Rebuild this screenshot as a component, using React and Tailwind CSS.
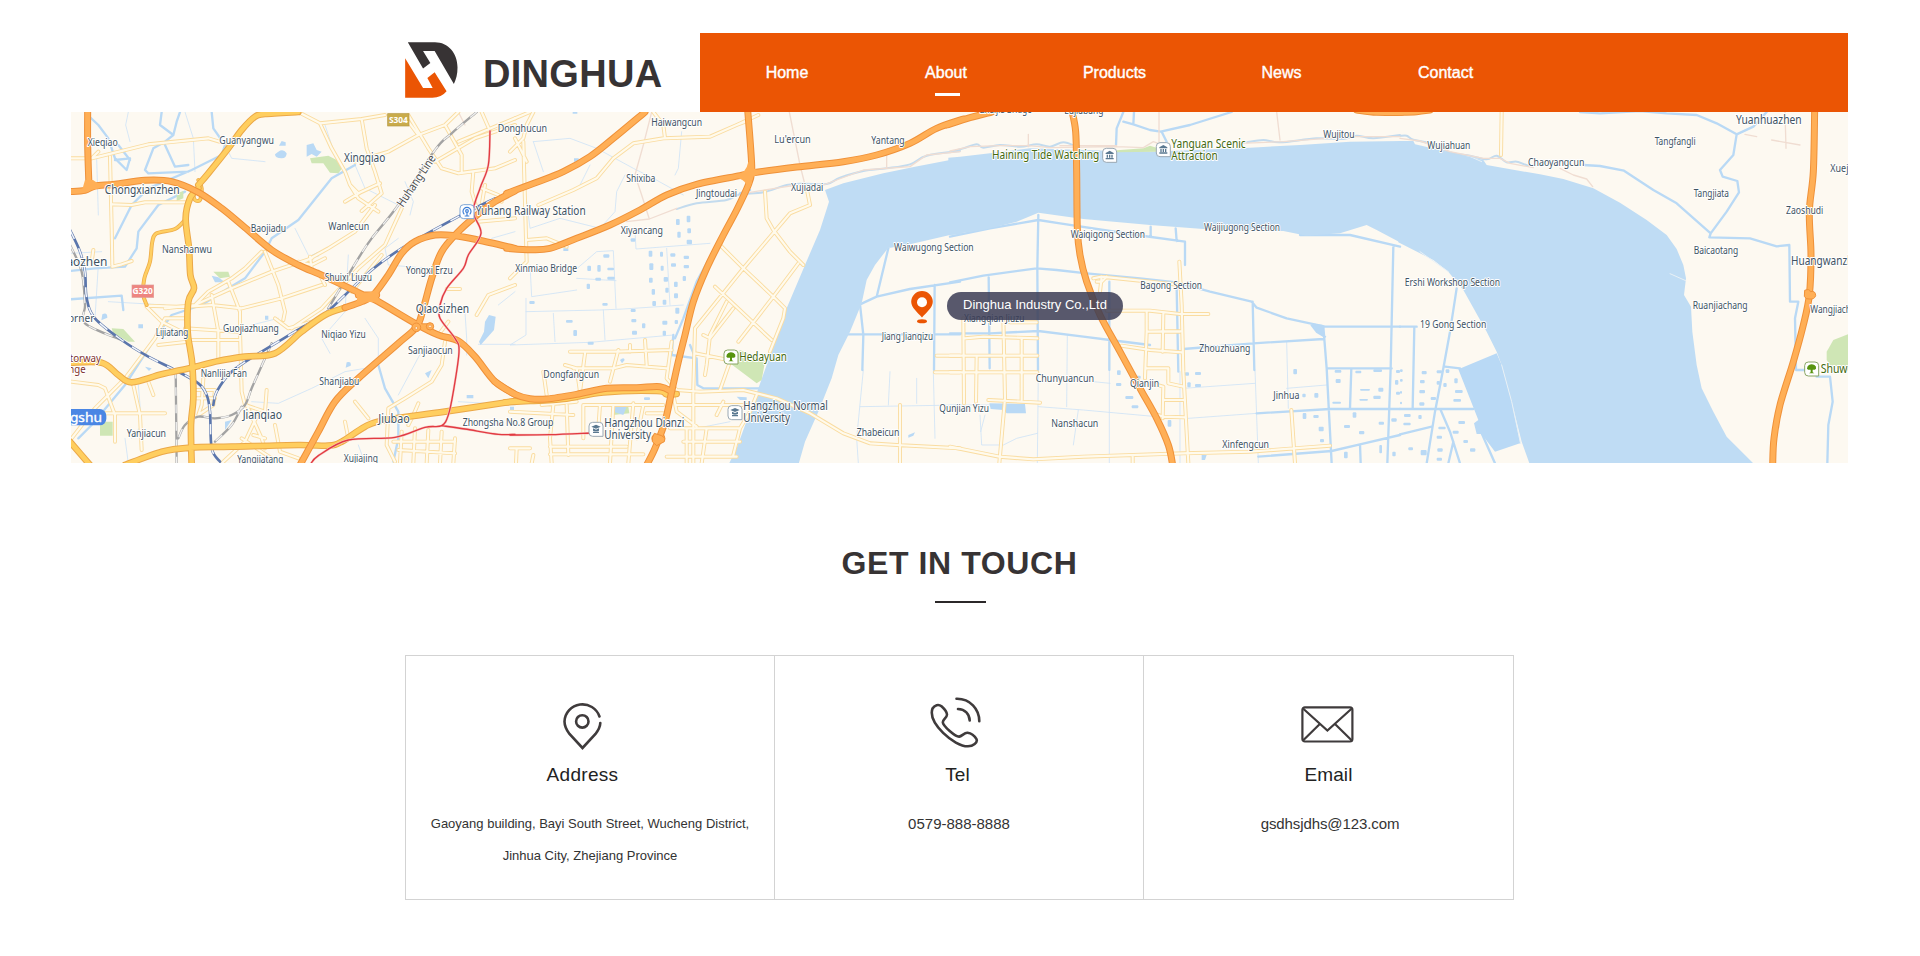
const navItems = [
  { name: 'Home', left: 'ml-[66px]', width: 'w-[42px]' },
  { name: 'About', left: 'ml-[117px]', width: 'w-[42px]', active: true },
  { name: 'Products', left: 'ml-[116px]', width: 'w-[63px]' },
  { name: 'News', left: 'ml-[115px]', width: 'w-[41px]' },
  { name: 'Contact', left: 'ml-[116px]', width: 'w-[55px]' },
];

// The map is cut in four tiles, three map units to one pixel.
// Label: [x, baseline, width, text, big]
const tiles = [
  {
    x: 0,
    streams:
      'M60 90L62 250M95 160L100 330M190 21L182 60 195 110M390 200L385 100 360 21M110 440L15 445M130 590L300 600 M480 120L500 160 600 170 M780 60L810 150 M870 180L900 250 1000 300 M1020 230L1045 290 1035 330 M690 370L730 450M850 450L840 620 770 700 795 745M1200 620L1205 700 1205 750M1240 718H1350M1080 720L1000 870M640 640L560 660 M900 640L940 700 940 780M1350 560L1300 600M1000 400L960 430 970 480 1090 490M560 890L640 895 740 850 840 800 900 790M180 1000L190 1075M900 1075L880 1020M1350 900L1180 890M100 480L90 640M220 840L230 960 200 1000M1280 400L1350 380',
    canals:
      'M68 30L100 60 130 100 150 160 185 195 195 160 150 165M195 165L160 120M290 21L285 60 325 90 335 50 345 21M325 90L300 110 265 130 240 195 250 205 370 200M300 120L330 185 370 180 M440 21L445 70 480 120 470 150 380 195 250 250 200 300 150 400M360 260L280 300 220 380 215 430 180 485 90 490 15 498 M15 583L170 572 175 615M870 180L800 220 700 345 620 400 600 440 540 520 490 550 410 600 320 630 270 700 180 840 80 960 40 1000M940 780L960 850 1000 920 1000 1000 985 1070',
    ponds:
      'M725 120l20 -5 10 20 15 5 -15 15 -15 -8 -15 8zM640 140q15 -10 25 5 0 15 -15 15 -20 0 -20 -12zM650 108l12 4 0 10 -20 0zM1260 650l12 -20 20 5 -5 40 -40 45 -5 -10 15 -30zM440 512l20 5 20 15 -30 0zM112 628q15 -8 15 10l-18 8zM845 772q15 -5 12 10l-15 6zM600 632h10v12h-10zM220 658h14v12h-14zM1205 870h20v10h-20zM1080 805l20 -10 -10 25zM740 450l20 -10 0 15zM240 785l20 5 -8 8zM480 950l20 -5 -20 30z',
    parks:
      'M735 160L790 152 815 165 835 185 820 205 795 203 775 175 740 175zM445 500h20l25 0 5 15 -30 5zM140 670L175 672 210 710 190 710 145 685zM335 265L355 258 355 280 335 288zM105 950h38v42h-38z',
    paths: 'M1200 60L1180 21',
    minor:
      'M15 160H80L250 118 430 100 480 115M80 160L100 140M135 155L140 370 142 480M142 298L200 300 240 292 360 292M142 485L170 478 200 468M700 21L765 55 890 42 960 30M765 55L800 130 840 200 855 240 880 280 940 320M890 42L905 130 930 200 950 265 890 318M855 240L880 265 945 235M840 290L890 260M870 170L970 140 1060 90 1140 60 1180 21M1030 30L1090 130 1130 190 1180 205 1290 190 1350 165M1140 60L1190 150 1190 200M1180 110L1350 40M1250 21L1275 78M1225 200L1220 260 1235 310M1060 90L1030 50M1110 170L1230 100 1350 60M1010 310L960 420 880 490 770 610 680 670M930 300L870 380 790 430 700 480 M590 440L540 490 500 520 430 560 390 600 300 610 M600 440L640 540 660 620 655 645M245 602L360 606 440 600 530 610 650 580 770 540M390 600L500 550 620 500 740 460M440 570L460 680 460 760M490 530L525 620 525 680 530 860 540 900 600 920 605 855M360 670L520 680M380 705L520 705M370 640L300 640 270 700 180 820 90 910 20 1000M245 605L290 650 350 680M280 720L370 710M630 640L670 670 740 650M20 830L100 840 120 850 150 930 150 1010M205 840L225 930 230 1035M120 925L300 925M250 830L265 870M415 820L410 900 400 930M385 855H450L445 900 400 930M385 880H450M950 450L860 560M1350 540L1270 570 1235 630M1140 710L1130 780 1100 830 1020 880 970 910 965 1020 990 1070M870 890L910 940M1060 895L1045 930 1030 960M985 1010H1170M1000 1035L1170 1045M1010 980L1005 1075M1050 970L1045 1075M1090 975L1085 1075M1130 980L1125 1075M1170 1000L1165 1075M840 950L850 1000M700 470L740 480 780 460M735 455L740 490M780 540L760 500M1145 552H1185M565 990L600 1000M545 900L590 1000 600 1030M575 935L540 1010 470 1075M530 1000L620 1060M630 960L645 1040 700 1060M85 435L80 470M1150 650L1120 690M1250 250L1300 270 1310 290M1240 350L1350 340M1260 240L1250 300',
    yellow:
      'M840 608L780 630 710 680 630 745 540 755 460 768 380 788 290 808 200 832 160 810 110 773 15 773M700 21L600 27 570 35 530 75 490 130 430 205 400 240M400 250L375 280 362 340 372 430 376 510 387 550 370 590 368 680 375 730 382 780 385 880 378 960 380 1080M15 1010L75 1080M180 1080L290 1040 375 1028 500 1025 700 1020 790 1022 830 1010 900 965 960 945 1140 920 1350 888',
    yellowThin: 'M360 345L330 372 275 385 262 410 255 470 238 520 235 570 245 600M385 270L390 285 405 285 410 250 400 225',
    orange:
      'M68 15L68 120 72 245M15 260L60 256 90 243 150 238 240 226 320 230 400 262 470 310 540 368 620 435 700 480 780 515 900 572 940 590 1050 655 1120 690 1180 708 1230 755 1290 830 1350 868M1350 258L1290 290 1230 335 1180 380 1130 440 1100 520 1075 610 1055 665 1000 715 880 820 810 890 760 980 705 1080M1350 430L1240 405 1170 392 1110 390 1050 410 1010 445 970 510 925 570 890 590 840 608M880 570L935 570M1055 665L1095 665',
    rail: 'M15 375L45 440 60 500 65 580 90 640 170 705 250 755 330 795 400 835 425 870 435 920 440 1030 465 1070M1290 280L1180 335 1010 430 920 495 840 570 780 625 690 680 590 740 500 800 455 860 445 900',
    railGrey:
      'M1235 21L1160 85 1110 135 1000 300 920 400 880 460 790 610M15 420L50 500 60 600 60 655 170 705M332 795L335 1075M620 715L600 760 560 850 540 900 500 930 450 940 400 935 360 960 340 1000M530 905L500 960 450 1010',
    metro:
      'M1275 78L1270 180 1245 250 1225 320 1248 385 1210 450 1195 490 1145 550 1125 600 1125 640 1170 700 1182 740 1165 860 1150 930 1130 962 1080 967 990 997 850 1005 760 1052 735 1080M1130 962L1200 972 1300 988 1350 988',
    labels: [
      [68, 122, 90, 'Xieqiao'],
      [463, 117, 164, 'Guanyangwu'],
      [837, 172, 124, 'Xingqiao', true],
      [119, 266, 225, 'Chongxianzhen', true],
      [557, 381, 106, 'Baojiadu'],
      [790, 375, 123, 'Wanlecun'],
      [291, 445, 150, 'Nanshanwu'],
      [-33, 482, 160, 'Qiaozhen', true],
      [779, 528, 142, 'Shuixi Liuzu'],
      [1023, 507, 140, 'Yongxi Erzu'],
      [-10, 650, 98, 'Corner'],
      [272, 692, 98, 'Lijiatang'],
      [474, 682, 167, 'Guojiazhuang'],
      [1052, 624, 160, 'Qiaosizhen', true],
      [769, 700, 133, 'Niqiao Yizu'],
      [1029, 747, 134, 'Sanjiaocun'],
      [407, 817, 139, 'Nanlijia Fan'],
      [763, 839, 120, 'Shanjiabu'],
      [533, 942, 118, 'Jianqiao', true],
      [940, 953, 94, 'Jiubao', true],
      [185, 995, 118, 'Yanjiacun'],
      [517, 1073, 138, 'Yangjiatang'],
      [836, 1070, 103, 'Xujiajing'],
      [1193, 962, 272, 'Zhongsha No.8 Group'],
      [1232, 330, 330, 'Yuhang Railway Station', true],
      [1298, 81, 148, 'Donghucun'],
    ],
  },
  {
    x: 1335,
    streams:
      'M70 110L100 200M70 110L180 100 260 130 370 190 430 220 520 270M515 80L505 190 495 210M240 180L205 250M345 210L320 260 315 320 270 370 M270 370L150 340 60 370 50 290M375 380L378 432 600 415M48 580V690L0 720 240 712 490 690M48 620L270 615 340 612 520 600M130 625L135 710M280 615L285 705M470 430L480 600M190 500L260 440 310 437 318 610M200 520L318 527M60 480L65 575 200 555M1130 430L1200 415M1060 795L1040 1000 1045 1075M1140 800L1135 900M1220 820V895M1050 905L1350 900M1270 800L1275 1000M70 890L150 900M560 970L660 950',
    canals:
      'M690 265L720 255M1350 530L1200 552 1100 575 1050 598 1020 620M1050 598L1060 690 1057 795M1135 430L1100 575M1010 688H1350M1274 540L1272 795M485 750L560 760 562 840 580 850 750 850M540 720L555 755M490 690L485 750M690 300L620 420 560 530 520 640 495 700',
    river:
      'M655 1080L680 1030 720 920 770 780 830 610 885 480 930 375 957 290 945 255 1000 235 1120 205 1215 185 1355 158V388L1320 390 1200 418 1135 428 1095 480 1070 525 1055 595 1020 680 985 750 965 820 925 920 885 1010 865 1080z',
    ponds:
      'M188 21h14v5h-14zM192 160h14v10h-14zM305 905L330 900 350 905 340 930 310 920zM330 765q12 -10 14 0l-8 10zM680 875l30 2 0 8 -20 0zM1195 990l20 -8 -5 10 -15 6zM160 430h15v8h-15zM0 905h12v12h-12z',
    blocks: [
      [498, 342, 11, 18], [530, 332, 11, 20], [502, 380, 10, 18], [532, 370, 11, 15], [530, 404, 16, 14], [362, 400, 14, 10], [280, 448, 18, 10],
      [416, 437, 11, 18], [450, 440, 9, 15], [481, 445, 15, 10], [521, 452, 16, 10], [232, 482, 11, 16], [262, 480, 10, 20], [292, 488, 20, 8],
      [418, 475, 12, 20], [452, 482, 9, 15], [483, 475, 15, 10], [521, 480, 16, 10], [256, 518, 17, 9], [292, 515, 22, 9], [230, 536, 10, 16],
      [417, 518, 11, 15], [461, 516, 13, 14], [492, 530, 11, 16], [518, 513, 10, 15], [425, 552, 10, 17], [427, 588, 11, 15], [466, 548, 10, 15],
      [458, 584, 11, 15], [492, 565, 12, 15], [496, 608, 12, 18], [58, 588, 16, 9], [277, 594, 16, 8], [168, 645, 20, 8], [190, 675, 11, 18],
      [362, 612, 15, 9], [364, 642, 15, 10], [366, 677, 15, 12], [396, 655, 10, 15], [457, 647, 15, 12], [458, 677, 10, 15], [494, 645, 10, 12], [233, 710, 18, 9], [402, 877, 18, 8],
    ],
    parks: 'M660 775L690 735 765 770 755 825 740 835zM305 912L355 905 358 925 310 930z',
    paths: 'M425 21L400 120 375 210 395 270 418 342M838 21L870 180 885 240M1130 150V190M350 350L418 342 500 310M720 262L860 240M940 240L1060 195 1200 185 1250 150 1350 140',
    shore: 'M500 312L560 295 650 285 690 268 760 262 830 240 880 236 950 237 990 218 1060 198 1130 190 1200 178 1250 152 1350 138',
    minor:
      'M0 140L40 100 50 60 70 21M40 110L48 400M15 40L60 21M15 100L50 170M465 100L460 60 430 21M85 300L190 255 260 220 310 160 370 115 460 100 600 95 680 60 745 30M680 60L720 45M48 400L50 470 0 520M50 405L110 400 170 425M765 260L770 340 790 375 840 440 880 480M900 300L840 325 795 378 700 490 555 670 550 850 550 1075M900 300L890 250M630 420L700 490 790 575 825 610 820 640 780 740M615 545L785 705M865 475L790 575 685 710M650 590L600 690 590 780 585 810M580 690L600 700 670 610M555 745L680 770M660 770L630 855M180 740H315L485 735M190 790H310L350 780 470 790M325 735L300 830M360 720V740M405 705L410 780M225 745L210 860M485 710L470 820 500 855 570 860 700 855 800 880 900 925 1000 985 1080 1015 1160 1020 1350 1030M165 780L200 790 210 860M100 800L110 870M95 900L200 890M130 900L120 1000 125 1075M0 920L190 930M225 900H460M220 900V1000M270 900L265 970M0 1030L60 1030M20 1030L18 1075M70 1050L65 1075M120 1025L350 1025M170 900L175 1050M310 900L300 1075M370 895L355 1075M400 900L380 1000M410 925H460M500 900H740M490 870L500 920 560 965M480 970H690M520 1010H690M470 1055H680M590 970L575 1075M530 970V1075M740 870L720 920 690 970 670 1050M640 890L620 930M1170 900L1170 1075M1350 752H1280M1350 802H1275M120 1048H400',
    yellow: 'M-15 892L60 888 160 882 280 862 440 858 470 868 500 867',
    orange:
      'M405 21L310 100 240 155 160 200 80 232 -10 265M-10 430L60 434 120 430 200 400 300 360 390 315 470 270 560 238 690 212 740 202 860 186 1000 170 1100 150 1200 115 1280 70 1360 42M713 15L722 130 725 200 715 240 680 315 640 390 590 490 550 590 525 690 505 770 485 860 465 950 435 1030 410 1080M-45 830L15 868 60 881 110 882 200 868 290 850 380 848 450 845 485 860M435 1000L455 998',
    metro: 'M0 990L120 989 240 984',
    labels: [
      [424, 62, 152, 'Haiwangcun'],
      [793, 114, 109, "Lu'ercun"],
      [1084, 117, 100, 'Yantang'],
      [349, 231, 87, 'Shixiba'],
      [558, 276, 123, 'Jingtoudai'],
      [843, 258, 97, 'Xujiadai'],
      [332, 387, 127, 'Xiyancang'],
      [16, 500, 185, 'Xinmiao Bridge'],
      [1152, 437, 239, 'Waiwugong Section'],
      [1115, 704, 154, 'Jiang Jianqizu'],
      [100, 820, 167, 'Dongfangcun'],
      [688, 767, 143, 'Hedayuan', true, '#44690f'],
      [700, 916, 253, 'Hangzhou Normal', true],
      [700, 952, 140, 'University', true],
      [283, 966, 240, 'Hangzhou Dianzi', true],
      [283, 1002, 140, 'University', true],
      [1040, 992, 128, 'Zhabeicun'],
      [1288, 922, 149, 'Qunjian Yizu'],
    ],
  },
  {
    x: 2655,
    streams:
      'M265 800L262 1075M352 690L350 905M478 800V1075M480 835L430 830M0 900H120M265 905L400 915 620 935M385 915L370 1020M90 930L95 1020 160 1020 200 1000 262 985M700 850L915 835M715 940L920 925M1010 710L1015 910M915 795L925 1075M1010 850L1130 840M690 800V1075M105 930L92 980',
    canals:
      'M0 532L100 512 260 490 320 495 410 505 570 520 680 532 780 560 905 590 920 608 1010 640 1125 665 1350 665M265 330L262 490 264 795M0 685H120L265 678 400 695 480 705 600 720M116 517L119 790M478 530V795M0 395L120 370 265 345 330 355 560 390 705 410V480M602 365V395M677 370L680 408M680 550L685 800M700 732L910 715 1120 702M908 590L913 795M1120 665L1130 790 1145 1075M1330 425L1322 790 1312 1075M1130 790H1325M1204 790L1200 910M920 925L1140 912 1350 912M925 1055L1145 1038 1230 1018 1350 990M1230 1018L1232 1075M520 21L500 70 498 120M520 50L550 58 552 21M550 58L600 75 632 80 720 60 845 21M635 80L650 110M1050 390L1200 390 1350 425M1085 660L1100 680 1125 695',
    river:
      'M-5 158L30 155 120 145 240 130 500 138 600 140 900 128 1050 120 1200 110 1355 108V415L1280 375 1250 360 1170 385 1070 392 1000 378 760 372 600 360 400 342 265 323 200 350 100 375 -5 390z',
    ponds: 'M118 895L225 897 228 925 170 925 160 915 122 912zM1085 655l35 5 0 35 -20 -15zM755 1050h15l-5 15h-10z',
    blocks: [
      [501, 796, 11, 14], [498, 834, 16, 9], [526, 873, 24, 9], [545, 901, 20, 9], [705, 802, 12, 10], [735, 801, 18, 9], [712, 832, 10, 15], [735, 837, 18, 9],
      [653, 945, 11, 20], [558, 812, 14, 9], [1030, 792, 11, 16], [1057, 866, 10, 11], [1093, 864, 12, 14], [1058, 924, 11, 18], [1090, 930, 16, 9], [1106, 965, 15, 14],
      [1110, 1002, 12, 10], [1154, 795, 20, 8], [1157, 822, 15, 12], [1216, 797, 18, 8], [1270, 793, 26, 8], [1230, 852, 30, 5], [1285, 848, 15, 12], [1228, 882, 26, 5], [1270, 872, 22, 10],
      [1147, 890, 26, 6], [1208, 922, 11, 16], [1182, 960, 18, 9], [1227, 978, 16, 10], [1286, 950, 16, 9], [1288, 1020, 8, 25], [1182, 1040, 11, 20], [1327, 1040, 10, 14], [1324, 940, 16, 10],
      [1338, 795, 12, 9], [1338, 860, 12, 9], [1335, 825, 10, 14],
    ],
    parks: 'M500 136L580 130 600 122 632 132 620 140 500 142z',
    paths: 'M0 138L60 125 150 122 235 122 300 128 500 125 580 128 610 110 632 118M235 88V125M627 21V110M980 21L990 105M870 115L1000 110 1200 95 1350 95M330 122H500',
    shore: 'M0 142L40 130 80 118 100 128 150 120 210 125 260 118 300 125 340 112 380 125M890 112L940 105 990 112 1100 100 1180 102 1220 92 1270 100 1350 90',
    minor:
      'M688 470L695 600 700 800 715 1075M470 617H600L690 627H775M590 620V680H690M590 680L585 820M640 625L638 740M515 722L600 735 695 742M590 680L695 678M590 790H655V835L700 845M605 835L640 845 638 940M640 885H705M610 925L640 935 705 937M430 520L455 515 600 530 690 540M455 515L450 560M440 530L455 530 470 515M40 640L42 895M160 640L165 880 148 1075M0 752H262M0 802H262M45 700L100 695 262 700M215 700L215 885M115 885L270 893M80 755L78 890M180 652H260M0 1025L148 1055 250 1063 400 1055 700 1045 900 1040 1140 1022M1024 915L1035 1075M548 1055V1075',
    orange: 'M-10 60L60 38 125 21M365 15L377 80 380 200 382 370 390 450 410 530 450 630 510 740 570 850 620 940 655 1020 668 1080M1220 15L1280 22 1355 22',
    labels: [
      [90, 25, 155, 'Zhaijia Bridge'],
      [343, 27, 117, 'Lujiabang'],
      [126, 162, 322, 'Haining Tide Watching', true, '#44690f'],
      [664, 128, 223, 'Yanguan Scenic', true, '#44690f'],
      [664, 164, 139, 'Attraction', true, '#44690f'],
      [1120, 98, 94, 'Wujitou'],
      [362, 398, 223, 'Waiqigong Section'],
      [762, 378, 228, 'Waijiugong Section'],
      [571, 553, 185, 'Bagong Section'],
      [748, 740, 153, 'Zhouzhuang'],
      [257, 831, 175, 'Chunyuancun'],
      [540, 847, 87, 'Qianjin'],
      [970, 881, 78, 'Jinhua'],
      [304, 967, 141, 'Nanshacun'],
      [817, 1030, 140, 'Xinfengcun'],
      [42, 650, 181, 'Xiangqian Jiuzu'],
    ],
  },
  {
    x: 4005,
    streams: 'M305 780L335 890 360 1015',
    canals:
      'M540 21L600 25 720 18 800 25 890 30 950 55 1010 88 1060 65 1100 21M1010 88L1000 150 960 195 968 215 1012 228 1017 262 980 320 932 385 830 295 760 255 672 197 600 183 550 180M932 385L928 397 1050 400 1130 424 1168 420 1170 590 1195 590 1185 640 1188 795H1220M1250 815H1290L1298 890 1285 960 1282 1075M170 550L150 680 130 790 105 920 80 1075M0 665H50M43 665L38 910M0 912H220M0 988L95 965M122 915L150 980 180 1075M160 1010L145 1075M135 785L180 790M245 985L285 1075',
    river:
      'M-5 108L40 108 45 118 120 135 250 165 260 180 420 208 490 222 580 250 660 293 740 345 800 390 830 432 850 480 858 520 852 570 873 605 877 680 890 780 905 850 940 920 980 995 1065 1080H390L365 1010 335 890 305 780 290 740 260 680 190 555 165 525 145 500 100 465 -5 412z',
    ponds: 'M175 793L290 745 305 780 335 890 360 1015 285 1040 245 987 230 987 222 955 235 945z',
    blocks: [
      [0, 793, 8, 8], [0, 822, 8, 8], [0, 858, 6, 8], [0, 890, 6, 8], [65, 798, 15, 10], [110, 796, 16, 9], [137, 793, 11, 11], [60, 825, 14, 10], [110, 828, 10, 11], [130, 834, 10, 12], [163, 820, 10, 15],
      [58, 855, 17, 10], [165, 855, 23, 9], [92, 876, 16, 9], [58, 892, 15, 10], [160, 882, 23, 8], [12, 927, 20, 9], [55, 930, 10, 12], [10, 953, 22, 8], [175, 948, 20, 9], [115, 965, 22, 8],
      [158, 977, 18, 9], [110, 992, 16, 9], [190, 1005, 14, 9], [25, 1027, 14, 9], [62, 1035, 18, 16], [112, 1030, 16, 10], [210, 1030, 16, 10], [110, 1058, 16, 9],
    ],
    parks: 'M1280 740L1300 705 1350 685V790L1290 780 1280 765z',
    paths: 'M480 190L520 210 560 222 578 245M0 100L60 108 150 140 250 160 300 160 330 175 400 188M1035 88L1070 95M1115 105L1200 120M1155 21L1158 130',
    shore: 'M0 93L20 92 40 104 90 115 150 142 210 152 260 163 290 152 320 172 350 170 385 183',
    minor: 'M305 21L303 150',
    foam: 'M810 506L857 527M60 440L145 500M245 170L200 150M305 780L335 890 362 1015',
    orange: 'M-10 22L50 20 90 15M1244 15L1240 200 1228 320 1233 450 1228 570 1210 660 1180 770 1140 900 1122 1000 1118 1080',
    labels: [
      [82, 131, 129, 'Wujiahuan'],
      [384, 182, 169, 'Chaoyangcun'],
      [764, 120, 123, 'Tangfangli'],
      [1008, 58, 197, 'Yuanhuazhen', true],
      [881, 276, 106, 'Tangjiata'],
      [1291, 200, 100, 'Xuejiaqi'],
      [1158, 328, 112, 'Zaoshudi'],
      [881, 446, 134, 'Baicaotang'],
      [1173, 480, 223, 'Huangwanzhen', true],
      [14, 542, 286, 'Ershi Workshop Section'],
      [60, 669, 199, '19 Gong Section'],
      [878, 612, 165, 'Ruanjiachang'],
      [1231, 625, 167, 'Wangjiachang'],
      [1262, 803, 118, 'Shuwen', true, '#44690f'],
    ],
  },
];

const strokes = [
  { key: 'streams', stroke: '#cfe3f6', width: 2.5 },
  { key: 'canals', stroke: '#b9d9f5', width: 7 },
  { key: 'river', fill: '#bfdcf4' },
  { key: 'parks', fill: '#cfe6b5' },
  { key: 'ponds', fill: '#b9d9f5' },
  { key: 'blocks' },
  { key: 'foam', stroke: '#e9f1f6', width: 3 },
  { key: 'shore', stroke: '#c3dbee', width: 6, smooth: true },
  { key: 'paths', stroke: '#f0ddd2', width: 4 },
  { key: 'minor', stroke: '#fadca0', width: 12 },
  { key: 'minor', stroke: '#fffaec', width: 6.5 },
  { key: 'railGrey', stroke: '#a3a3a3', width: 7, smooth: true },
  { key: 'railGrey', stroke: '#f1f1f1', width: 4, dash: '26 26', smooth: true },
  { key: 'rail', stroke: '#5b76ac', width: 8, smooth: true },
  { key: 'rail', stroke: '#f3f6fb', width: 4.5, dash: '30 30', smooth: true },
  { key: 'yellowThin', stroke: '#eeae4c', width: 12, smooth: true },
  { key: 'yellowThin', stroke: '#ffcf62', width: 7, smooth: true },
  { key: 'yellow', stroke: '#eba848', width: 20, smooth: true },
  { key: 'yellow', stroke: '#ffce5f', width: 14, smooth: true },
  { key: 'orange', stroke: '#ef9139', width: 21, smooth: true },
  { key: 'orange', stroke: '#ffaf56', width: 15, smooth: true },
  { key: 'metro', stroke: '#f7c9c4', width: 7, smooth: true },
  { key: 'metro', stroke: '#e23a42', width: 4, smooth: true },
];

// Turns "M x y L x y x y ..." polylines into curves through the same points
function smoothPath(d) {
  return d
    .split('M')
    .filter((part) => part.trim())
    .map((part) => {
      const n = part.match(/-?[\d.]+/g).map(Number);
      const pts = [];
      for (let i = 0; i < n.length; i += 2) pts.push([n[i], n[i + 1]]);
      let out = `M${pts[0][0]} ${pts[0][1]}`;
      for (let i = 0; i < pts.length - 1; i++) {
        const p0 = pts[i - 1] || pts[i];
        const p1 = pts[i];
        const p2 = pts[i + 1];
        const p3 = pts[i + 2] || p2;
        out += `C${p1[0] + (p2[0] - p0[0]) / 6} ${p1[1] + (p2[1] - p0[1]) / 6} ${p2[0] - (p3[0] - p1[0]) / 6} ${p2[1] - (p3[1] - p1[1]) / 6} ${p2[0]} ${p2[1]}`;
      }
      return out;
    })
    .join('');
}

function PoiIcon({ x, y, type }) {
  const color = { tree: '#57940f', school: '#5a7890', museum: '#5a7890', station: '#3d7fd6' }[type];
  const border = { tree: '#88a564', station: '#7ea6d6' }[type] || '#9aa8b3';
  return (
    <g transform={`translate(${x} ${y})`}>
      <path d="M-10 -21H10Q21 -21 21 -10V21H-10Q-21 21 -21 10V-10Q-21 -21 -10 -21Z" fill="#fff" stroke={border} strokeWidth="3" />
      {type === 'tree' && <path d="M-8 -12Q0 -17 8 -12 15 -8 13 -1 8 4 3 2V10L8 13H-8L-3 10V2Q-10 4 -14 -1 -14 -9 -8 -12Z" fill={color} />}
      {type === 'school' && <path d="M-14 -8L0 -14 14 -8 0 -2ZM-9 -3L0 1 9 -3V4Q0 8 -9 4ZM-9 7H9V11H-9Z" fill={color} />}
      {type === 'museum' && <path d="M0 -14L12 -7V-4H-12V-7ZM-9 -2H-5V7H-9ZM-2 -2H2V7H-2ZM5 -2H9V7H5ZM-12 8H12V12H-12Z" fill={color} />}
      {type === 'station' && (
        <g fill="none" stroke={color} strokeWidth="3.5">
          <path d="M-8 8A12 12 0 1 1 8 8M0 2V12M-7 13H7" />
          <circle cx="0" cy="-2" r="4" />
        </g>
      )}
    </g>
  );
}

function MapCanvas() {
  return (
    <svg viewBox="18 21 5331 1053" preserveAspectRatio="none" className="block h-full w-full">
      <rect x="0" y="0" width="5400" height="1100" fill="#fdf9f1" />
      {strokes.map((s, i) => (
        <g key={i} fill={s.fill || 'none'} stroke={s.stroke} strokeWidth={s.width} strokeDasharray={s.dash} strokeLinejoin="round" strokeLinecap={s.dash ? 'butt' : 'round'}>
          {tiles.map((tile) => (
            <g key={tile.x} transform={`translate(${tile.x} 0)`}>
              {s.key === 'blocks'
                ? (tile.blocks || []).map(([x, y, w, h]) => <rect key={`${x}-${y}`} x={x} y={y} width={w} height={h} rx="3" fill="#b9d9f5" />)
                : tile[s.key] && <path d={s.smooth ? smoothPath(tile[s.key]) : tile[s.key]} />}
            </g>
          ))}
        </g>
      ))}

      {/* Interchanges */}
      <g fill="#ffaf56">
        <path d="M868 562Q905 572 942 550L938 575Q945 588 965 600L935 592Q905 588 868 596Q886 580 868 562Z" />
        <path d="M60 225L84 225 106 240 104 250 50 260Z" />
        <path d="M2050 170Q2058 194 2094 200L2062 216Q2062 235 2054 250L2042 235Q2038 225 2010 215 2044 205 2050 170Z" />
        <g stroke="#ef9139" strokeWidth="3">
          <circle cx="1054" cy="667" r="13" />
          <circle cx="1095" cy="664" r="11" />
        </g>
        <path d="M1768 985L1790 992 1800 1000 1798 1010 1775 1022 1762 1010 1762 998Z" stroke="#ef9139" strokeWidth="3" />
        <path d="M5219 556Q5234 550 5236 560 5252 556 5252 572 5248 584 5234 582 5222 584 5218 574Z" stroke="#ef9139" strokeWidth="3" />
      </g>
      <circle cx="1054" cy="669" r="4" fill="#fff3df" stroke="#ef9139" strokeWidth="2" />
      <circle cx="1095" cy="664" r="4" fill="#fff3df" stroke="#ef9139" strokeWidth="2" />

      {/* Place names */}
      <g fontFamily='"Noto Sans", "Open Sans", sans-serif' stroke="#fff" strokeWidth="6" strokeLinejoin="round" paintOrder="stroke">
        {tiles.map((tile) =>
          tile.labels.map(([x, y, w, text, big, color], i) => (
            <text key={`${text}-${i}`} x={tile.x + x} y={y} textLength={w} lengthAdjust="spacingAndGlyphs" fontSize={big ? 36 : 33} fill={color || '#405262'}>
              {text}
            </text>
          ))
        )}
        <text x="-30" y="771" textLength="138" lengthAdjust="spacingAndGlyphs" fontSize="33" fill="#7d2f2b">Motorway</text>
        <text x="-104" y="803" textLength="166" lengthAdjust="spacingAndGlyphs" fontSize="33" fill="#7d2f2b">Interchange</text>
        <text transform="translate(1014 308) rotate(-56)" textLength="178" lengthAdjust="spacingAndGlyphs" fontSize="36" fill="#4d4d4d">Huhang Line</text>
      </g>

      {/* Road shields */}
      <g fontFamily='"Noto Sans", sans-serif' fontWeight="700" fontSize="25" fill="#fff" textAnchor="middle">
        <rect x="968" y="26" width="64" height="37" fill="#c9ab4b" stroke="#b39742" strokeWidth="2" />
        <text x="1000" y="54">S304</text>
        <rect x="201" y="540" width="65" height="37" fill="#ee8580" stroke="#e29a94" strokeWidth="2" />
        <text x="233" y="568">G320</text>
      </g>
      <rect x="-40" y="912" width="164" height="49" rx="20" fill="#4a86e4" />
      <text x="-66" y="950" textLength="177" lengthAdjust="spacingAndGlyphs" fontFamily='"Noto Sans", sans-serif' fontSize="40" fill="#fff" stroke="#fff" strokeWidth="1">Gongshu</text>

      <PoiIcon x={1206} y={320} type="station" />
      <PoiIcon x={1998} y={756} type="tree" />
      <PoiIcon x={2010} y={923} type="school" />
      <PoiIcon x={1593} y={973} type="school" />
      <PoiIcon x={3134} y={151} type="museum" />
      <PoiIcon x={3295} y={134} type="museum" />
      <PoiIcon x={5240} y={792} type="tree" />
    </svg>
  );
}

function Logo() {
  return (
    <svg viewBox="30 21 159 169" className="block h-[56px] w-[53px]">
      <path d="M38 22H120C160 22 188 55 188 98 188 118 184 133 177 148L119 48H84L106 84 84 101Z" fill="#373334" />
      <path d="M30 70L84 160H113L97 130 119 112 155 170Q140 189 112 189H30Z" fill="#eb5504" />
    </svg>
  );
}

function AddressIcon() {
  return (
    <svg viewBox="0 0 39 48" fill="none" stroke="#3f3b3c" strokeWidth="2.6" strokeLinecap="round" className="h-[48px] w-[39px]">
      <path d="M36.5 14.5A18 18 0 0 0 1.5 19.5C1.5 24 3.5 28 6.5 32L19.5 46 32.5 32C35.5 28 37.2 25 37.3 21" />
      <circle cx="19.3" cy="19.4" r="6.2" />
    </svg>
  );
}

function PhoneIcon() {
  return (
    <svg viewBox="0 0 51 51" fill="none" stroke="#3f3b3c" strokeWidth="2.6" strokeLinecap="round" strokeLinejoin="round" className="h-[51px] w-[51px]">
      <path d="M2.5 11.5C4.5 8 8.5 6.8 11.5 9.3C14.5 12 16.8 15 17 17.5C17.2 20.5 12.8 22 12.8 25.2C13 29 25.5 40 29.2 39.6C31.8 39.2 34.5 35.5 37.5 35.8C40.5 36.2 44.5 38.8 46.5 42.2C48 45.5 43 49.2 38 49.3C24 49.5 -2.5 26 2.5 11.5Z" />
      <path d="M26.5 1.8C40 1.5 49.3 12 49.3 24.3" />
      <path d="M28 12C35 12.3 39.5 17 39.7 23.5" />
    </svg>
  );
}

function MailIcon() {
  return (
    <svg viewBox="0 0 53 37" fill="none" stroke="#3f3b3c" strokeWidth="2.2" className="h-[37px] w-[53px]">
      <rect x="1.4" y="1.3" width="50" height="34.2" rx="2.5" />
      <path d="M2 2.5L26.4 24.5 50.8 2.5M2 34.5L18.3 18.5M50.8 34.5L34.5 18.5" />
    </svg>
  );
}

export default function App() {
  return (
    <div className="h-[956px] w-[1920px] overflow-hidden bg-white pl-[71px] pt-[33px] font-['Liberation_Sans',Arial,sans-serif] text-[#373334]">
      {/* Header */}
      <header className="flex h-[79px] w-[1777px]">
        <div className="flex w-[629px] pl-[334px] pt-[9px]">
          <Logo />
          <span className="ml-[25px] mt-[10px] text-[38px] font-bold leading-[44px] tracking-[0.3px]">DINGHUA</span>
        </div>
        <nav className="flex flex-1 bg-[#eb5504] pt-[30px] text-base leading-5 text-white [-webkit-text-stroke:0.4px_white]">
          {navItems.map((item) => (
            <a key={item.name} className={`${item.left} ${item.width} flex flex-col items-center whitespace-nowrap`}>
              {item.name}
              {item.active && <span className="ml-[3px] mt-[10px] h-[3px] w-[25px] bg-white"></span>}
            </a>
          ))}
        </nav>
      </header>

      {/* Map */}
      <section className="relative h-[351px] w-[1777px]">
        <MapCanvas />
        <svg viewBox="0 0 22 33" className="absolute left-[840px] top-[179px] h-[33px] w-[22px]">
          <path d="M11 0A10.8 10.8 0 0 1 21.8 10.8C21.8 16.5 15.5 21.5 11 26.5 6.5 21.5 .2 16.5 .2 10.8A10.8 10.8 0 0 1 11 0Z" fill="#eb5504" />
          <circle cx="11" cy="11.2" r="5" fill="#fff" />
          <ellipse cx="11" cy="30.3" rx="5" ry="2" fill="#eb5504" />
        </svg>
        <div className="absolute left-[876px] top-[180px] flex h-[28px] w-[176px] items-center justify-center rounded-full bg-[#3b3c55]/85 pb-[2px] text-[13px] text-white">
          Dinghua Industry Co.,Ltd
        </div>
      </section>

      {/* Get in touch */}
      <section className="ml-[334px] w-[1109px] pt-[82px]">
        <h2 className="text-center text-[32px] font-bold leading-[36px] tracking-[0.6px]">GET IN TOUCH</h2>
        <div className="mx-auto mt-[20px] h-[2px] w-[51px] translate-x-px bg-[#2b2829]"></div>

        <div className="mt-[52px] grid h-[245px] grid-cols-3 divide-x divide-[#d3d3d3] border border-[#d3d3d3]">
          <div className="flex flex-col items-center">
            <div className="mr-[16px] mt-[46px]">
              <AddressIcon />
            </div>
            <h3 className="mr-[15px] mt-[13px] text-[19px] leading-6 tracking-[0.3px] text-[#222]">Address</h3>
            <p className="mt-[21px] whitespace-nowrap text-center text-[13px] leading-8 text-[#333]">
              Gaoyang building, Bayi South Street, Wucheng District,
              <br />
              Jinhua City, Zhejiang Province
            </p>
          </div>
          <div className="flex flex-col items-center">
            <div className="mr-[8px] mt-[41px]">
              <PhoneIcon />
            </div>
            <h3 className="mr-[3px] mt-[15px] text-[19px] leading-6 text-[#222]">Tel</h3>
            <p className="mt-[21px] text-[15px] leading-8 text-[#333]">0579-888-8888</p>
          </div>
          <div className="flex flex-col items-center">
            <div className="mr-[2px] mt-[50px]">
              <MailIcon />
            </div>
            <h3 className="mt-[20px] text-[19px] leading-6 tracking-[0.1px] text-[#222]">Email</h3>
            <p className="ml-[3px] mt-[21px] text-[15px] leading-8 tracking-[-0.1px] text-[#333]">gsdhsjdhs@123.com</p>
          </div>
        </div>
      </section>
    </div>
  );
}
